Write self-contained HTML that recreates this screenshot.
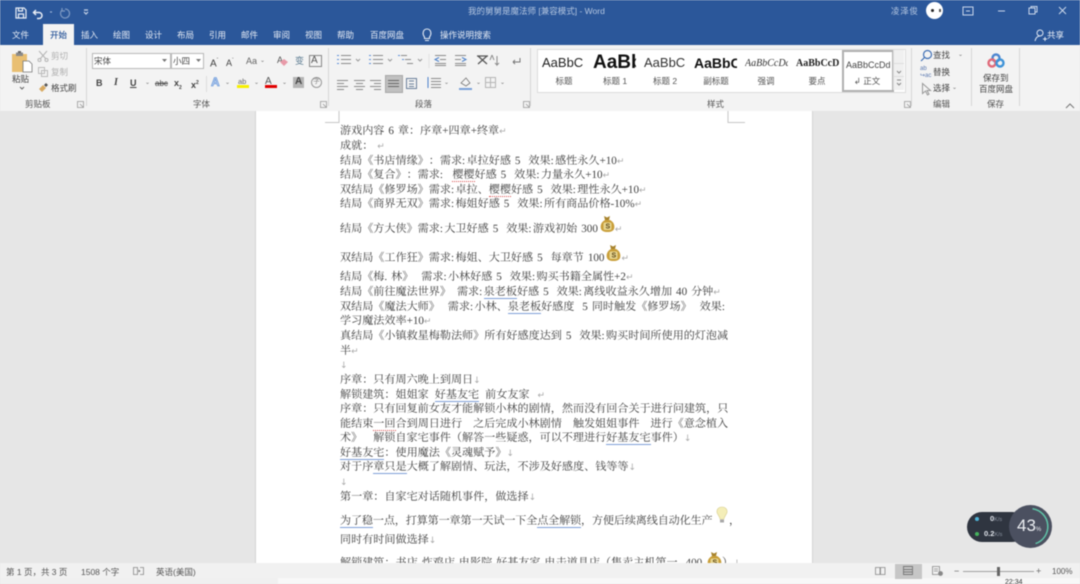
<!DOCTYPE html>
<html lang="zh"><head><meta charset="utf-8"><title>Word</title>
<style>
html,body{margin:0;padding:0;background:#e6e6e6}
#w{position:relative;width:1080px;height:584px;overflow:hidden;background:#e6e6e6;font-family:"Liberation Sans","Noto Sans CJK SC",sans-serif;filter:blur(.45px)}
#w div,#w span.a,#w svg.a{position:absolute}
.t{white-space:nowrap;font-size:8.5px;line-height:12px;color:#444}
.tab{white-space:nowrap;font-size:8.5px;line-height:12px;color:#e4eaf4;top:29px}
.g{white-space:nowrap;font-size:8.5px;line-height:12px;color:#555;top:98px}
.sep{width:1px;background:#d6d6d6;top:48px;height:58px}
.l{left:340px;margin-top:1px;white-space:pre;font-family:"Liberation Serif","Noto Serif CJK SC",serif;font-size:11.1px;line-height:14px;color:#404040;word-spacing:1.2px;text-rendering:geometricPrecision;font-kerning:none;text-spacing-trim:space-all}
.l i{font-style:normal;color:#aaa;font-size:9px;font-family:"DejaVu Sans",sans-serif}
.l b{font-weight:normal;display:inline-block;width:4.5px}
.l em{font-style:normal;display:inline-block;width:11px}
.l s{text-decoration:none;display:inline-block;width:6px}
.u{border-bottom:1.3px solid #7f9fd8}
.r{border-bottom:1.3px dotted #d85050}
.s{white-space:nowrap;font-size:8.5px;line-height:12px;color:#555;text-align:center;width:56px}
.ib{white-space:nowrap;color:#555;line-height:12px}
.st{white-space:nowrap;font-size:8.5px;line-height:12px;color:#555;top:566px}
</style></head><body><div id="w">

<div style="left:0;top:0;width:1080px;height:45px;background:#2b579a"></div>
<div style="left:0;top:45px;width:1080px;height:66px;background:#f3f3f3"></div>
<div style="left:43px;top:24px;width:31px;height:22px;background:#f3f3f3"></div>

<svg class="a" style="left:14px;top:5px" width="80" height="16" viewBox="0 0 80 16" fill="none" stroke="#e8edf5" stroke-width="1.2">
<path d="M2 3h8l2 2v8H2zM4.500 3v3h4V3M4.500 13V9h5v4"/>
<path d="M22 5l-2.500 2.500L22 10M20 7.500h5a3 3 0 0 1 0 6h-2" stroke-width="1.500"/>
<path d="M36 7l2 0" stroke="#9fb6d8"/>
<path d="M51 4a4.500 4.500 0 1 1-3 1.200M48 3v3h3" stroke="#7c98c2"/>
<path d="M70 7l2 2 2-2M70 5h4" stroke="#c8d4e8"/>
</svg>

<div class="t" style="left:468px;top:5px;color:#b4c6e0;font-size:8.500px">我的舅舅是魔法师 [兼容模式]  -  Word</div>
<div class="t" style="left:891px;top:5px;color:#b4c6e0;font-size:8.500px;letter-spacing:.7px">凌泽俊</div>
<div style="left:926px;top:2px;width:17px;height:17px;border-radius:50%;background:#fff"></div>
<div style="left:931px;top:9px;width:3px;height:3px;background:#222;border-radius:50%"></div>
<div style="left:939px;top:9px;width:2px;height:3px;background:#555"></div>
<svg class="a" style="left:960px;top:4px" width="110" height="14" viewBox="0 0 110 14" fill="none" stroke="#c9d6ea" stroke-width="1">
<path d="M3 3h10v8H3zM6 7h4"/>
<path d="M38 7h7"/>
<path d="M69 4h6v6h-6zM71 4V2.500h6V8h-2"/>
<path d="M99 3l7 7M106 3l-7 7"/>
</svg>

<div class="tab" style="left:12px">文件</div>
<div class="tab" style="left:50px;color:#2b579a;font-weight:500">开始</div>
<div class="tab" style="left:81px">插入</div>
<div class="tab" style="left:113px">绘图</div>
<div class="tab" style="left:145px">设计</div>
<div class="tab" style="left:177px">布局</div>
<div class="tab" style="left:209px">引用</div>
<div class="tab" style="left:241px">邮件</div>
<div class="tab" style="left:273px">审阅</div>
<div class="tab" style="left:305px">视图</div>
<div class="tab" style="left:337px">帮助</div>
<div class="tab" style="left:370px">百度网盘</div>
<svg class="a" style="left:421px;top:27px" width="12" height="15" viewBox="0 0 12 15" fill="none" stroke="#e4eaf4" stroke-width="1.100"><path d="M3.500 10C1 7 2 2 6 2s5 5 2.500 8v1.500h-5zM4 13.500h4"/></svg>
<div class="tab" style="left:440px">操作说明搜索</div>
<svg class="a" style="left:1034px;top:28px" width="13" height="14" viewBox="0 0 13 14" fill="none" stroke="#dfe7f3" stroke-width="1"><circle cx="6" cy="5" r="3"/><path d="M1 13c.5-3 2.500-5 5-5M9 11h4M11 9v4"/></svg>
<div class="tab" style="left:1047px;color:#eef2f8">共享</div>

<!-- clipboard -->
<svg class="a" style="left:11px;top:50px" width="22" height="24" viewBox="0 0 22 24"><path d="M1 4h15v18H1z" fill="#e9bf72"/><path d="M5 2.500h7V6H5z" fill="#8a8a8a"/><path d="M7 1h3v2H7z" fill="#666"/><path d="M12 11h6l3 3v8h-9z" fill="#fff" stroke="#777" stroke-width=".8"/></svg>
<div class="t" style="left:12px;top:73px;font-size:8.500px">粘贴</div>
<svg class="a" style="left:19px;top:86px" width="6" height="5" fill="none" stroke="#666"><path d="M1 1l2 2 2-2"/></svg>
<svg class="a" style="left:37px;top:50px" width="12" height="12" fill="none" stroke="#b5b5b5" stroke-width="1"><path d="M2 1l7 8M10 1L3 9"/><circle cx="2.500" cy="10" r="1.500"/><circle cx="9.500" cy="10" r="1.500"/></svg>
<div class="t" style="left:51px;top:50px;color:#b0b0b0">剪切</div>
<svg class="a" style="left:37px;top:66px" width="12" height="12" fill="none" stroke="#bbb"><path d="M1.500 1.500h6v6h-6zM4.500 4.500h6v6h-6z"/></svg>
<div class="t" style="left:51px;top:66px;color:#b0b0b0">复制</div>
<svg class="a" style="left:38px;top:82px" width="11" height="11"><path d="M1 7l4-4 3 3-4 4z" fill="#d8aa62"/><path d="M6 3l2-2 2 2-2 2z" fill="#555"/></svg>
<div class="t" style="left:51px;top:82px">格式刷</div>
<div class="g" style="left:25px">剪贴板</div>
<svg class="a" style="left:77px;top:101px" width="7" height="7" fill="none" stroke="#999" stroke-width=".8"><path d="M.5.500h6v6h-6zM3 3l3 3"/></svg>
<div class="sep" style="left:86px"></div>

<!-- font -->
<div style="left:92px;top:53px;width:77px;height:14px;background:#fff;border:1px solid #b8b8b8"></div>
<div class="t" style="left:94px;top:55px">宋体</div>
<svg class="a" style="left:162px;top:59px" width="5" height="4"><path d="M0 0h5L2.500 3z" fill="#777"/></svg>
<div style="left:171px;top:53px;width:31px;height:14px;background:#fff;border:1px solid #b8b8b8"></div>
<div class="t" style="left:173px;top:55px">小四</div>
<svg class="a" style="left:196px;top:59px" width="5" height="4"><path d="M0 0h5L2.500 3z" fill="#777"/></svg>
<div class="t" style="left:210px;top:55px;font-size:10px">A<sup style="font-size:5px">ˆ</sup></div>
<div class="t" style="left:226px;top:55px;font-size:9px">A<sup style="font-size:5px">ˇ</sup></div>
<div class="t" style="left:246px;top:55px;font-size:9px;color:#666">Aa</div>
<div class="t" style="left:260px;top:55px;font-size:6px;color:#777">⌄</div>
<div class="t" style="left:277px;top:54px;font-size:9px;color:#555">A</div>
<svg class="a" style="left:278px;top:56px" width="11" height="11"><path d="M2 6l4-3 4 3-4 4z" fill="#e89aa8"/></svg>
<div class="t" style="left:295px;top:55px;font-size:9px;color:#5a7a90">变</div>
<div style="left:309px;top:55px;width:11px;height:10px;border:1px solid #888"></div>
<div class="t" style="left:311px;top:55px;font-size:10px;color:#555;line-height:11px">A</div>
<div class="t" style="left:96px;top:77px;font-weight:bold;font-family:'Liberation Sans',sans-serif;font-size:9px">B</div>
<div class="t" style="left:114px;top:77px;font-style:italic;font-weight:bold;font-family:'Liberation Serif',serif;font-size:10px">I</div>
<div class="t" style="left:130px;top:77px;text-decoration:underline;font-size:9px;font-weight:bold">U</div>
<div class="t" style="left:145px;top:77px;font-size:6px;color:#777">⌄</div>
<div class="t" style="left:155px;top:78px;text-decoration:line-through;font-size:8px">abc</div>
<div class="t" style="left:174px;top:77px;font-weight:bold;font-size:9px">x<sub style="font-size:5px">2</sub></div>
<div class="t" style="left:191px;top:77px;font-weight:bold;font-size:9px">x<sup style="font-size:5px">2</sup></div>
<div style="left:206px;top:76px;width:1px;height:16px;background:#ddd"></div>
<div class="t" style="left:211px;top:76px;font-size:12px;color:#bcd0f0;-webkit-text-stroke:.6px #5b8fd6;font-weight:bold">A</div>
<div class="t" style="left:225px;top:77px;font-size:6px;color:#777">⌄</div>
<div class="t" style="left:238px;top:76px;font-size:7.500px;color:#666">ab</div>
<div style="left:237px;top:85px;width:12px;height:3px;background:#f6f000"></div>
<div class="t" style="left:254px;top:77px;font-size:6px;color:#777">⌄</div>
<div class="t" style="left:265px;top:76px;font-size:10px;color:#555">A</div>
<div style="left:265px;top:85px;width:12px;height:3px;background:#e00000"></div>
<div class="t" style="left:282px;top:77px;font-size:6px;color:#777">⌄</div>
<div style="left:293px;top:77px;width:11px;height:11px;background:#b5b5b5"></div>
<div class="t" style="left:295px;top:76px;font-size:10px;color:#444;font-weight:bold">A</div>
<div style="left:311px;top:77px;width:9px;height:9px;border:1px solid #999;border-radius:50%"></div>
<div class="t" style="left:313px;top:76px;font-size:7px;color:#888">字</div>
<div class="g" style="left:193px">字体</div>
<svg class="a" style="left:320px;top:101px" width="7" height="7" fill="none" stroke="#999" stroke-width=".8"><path d="M.5.500h6v6h-6zM3 3l3 3"/></svg>
<div class="sep" style="left:328px"></div>

<!-- paragraph -->
<svg class="a" style="left:335px;top:53px" width="165" height="40" viewBox="0 0 165 40" fill="none" stroke="#8a8a8a" stroke-width="1">
<path d="M6 2.500h10M6 6.500h10M6 10.500h10" /><path d="M2 2.500h2M2 6.500h2M2 10.500h2" stroke="#5b8fd6"/>
<path d="M21 6l2 2 2-2" stroke="#999"/>
<path d="M38 2.500h10M38 6.500h10M38 10.500h10"/><path d="M34 2.500h2M34 6.500h2M34 10.500h2" stroke="#5b8fd6"/>
<path d="M53 6l2 2 2-2" stroke="#999"/>
<path d="M66 2.500h6M70 6.500h6M72 10.500h6"/><path d="M63 2.500h2M67 6.500h2" stroke="#5b8fd6"/>
<path d="M83 6l2 2 2-2" stroke="#999"/>
<path d="M94 1v14" stroke="#e2e2e2"/>
<path d="M100 2.500h11M105 6.500h6M100 10.500h11M100 12.500h11"/><path d="M104 4.500l-4 2 4 2" stroke="#4a7fc8"/>
<path d="M120 2.500h11M120 6.500h6M120 10.500h11M120 12.500h11"/><path d="M127 4.500l4 2-4 2" stroke="#4a7fc8"/>
<path d="M143 3l9 8M152 3l-9 8M142 3h11" stroke="#555" stroke-width="1.200"/>
<path d="M2 27.500h11M2 30.500h7M2 33.500h11M2 36.500h7"/>
<path d="M19 27.500h11M21 30.500h7M19 33.500h11M21 36.500h7"/>
<path d="M35 27.500h11M39 30.500h7M35 33.500h11M39 36.500h7"/>
</svg>
<svg class="a" style="left:489px;top:54px" width="12" height="14" fill="none" stroke="#8a8a8a"><path d="M3 1l-2 5M3 1l2 5M8 2v9l2-2M8 11l-2-2" /></svg>
<svg class="a" style="left:511px;top:55px" width="12" height="12" fill="none" stroke="#777"><path d="M2 7h7V3M2 7l2-2M2 7l2 2"/></svg>
<div style="left:385px;top:75px;width:16px;height:16px;background:#c0c0c0;border:1px solid #a8a8a8"></div>
<svg class="a" style="left:388px;top:79px" width="12" height="10" fill="none" stroke="#666"><path d="M0 1.500h11M0 4.500h11M0 7.500h11"/></svg>
<svg class="a" style="left:405px;top:77px" width="13" height="13" fill="none" stroke="#6a7f9a"><path d="M1.500 1.500h10v10h-10zM4 4h5M4 7h5M4 9.500h5"/></svg>
<svg class="a" style="left:425px;top:76px" width="22" height="14" fill="none" stroke="#8a8a8a"><path d="M6 2.500h10M6 5.500h10M6 8.500h10M6 11.500h10"/><path d="M3 1v11" stroke="#4a7fc8"/></svg>
<div class="t" style="left:444px;top:77px;font-size:6px;color:#777">⌄</div>
<svg class="a" style="left:458px;top:75px" width="16" height="16"><path d="M3 8l5-5 4 5-4 3z" fill="#f4f4f4" stroke="#777" stroke-width=".8"/><path d="M1 13h13v2H1z" fill="#7aa0d8"/></svg>
<div class="t" style="left:476px;top:77px;font-size:6px;color:#777">⌄</div>
<svg class="a" style="left:484px;top:76px" width="14" height="14" fill="none" stroke="#b5b5b5"><path d="M1.500 1.500h10v10h-10zM6.500 1.500v10M1.500 6.500h10"/></svg>
<div class="t" style="left:500px;top:77px;font-size:6px;color:#777">⌄</div>
<div class="g" style="left:415px">段落</div>
<svg class="a" style="left:523px;top:101px" width="7" height="7" fill="none" stroke="#999" stroke-width=".8"><path d="M.5.500h6v6h-6zM3 3l3 3"/></svg>
<div class="sep" style="left:530px"></div>

<!-- styles -->
<div style="left:537px;top:49px;width:367px;height:42px;background:#fff;border:1px solid #dcdcdc"></div>
<div class="ib" style="left:542px;top:57px;font-size:13px;color:#222;width:45px;overflow:hidden">AaBbC</div>
<div class="s" style="left:536px;top:75px">标题</div>
<div class="ib" style="left:593px;top:52px;font-size:19px;line-height:22px;font-weight:bold;color:#111;width:43px;overflow:hidden">AaBb</div>
<div class="s" style="left:587px;top:75px">标题 1</div>
<div class="ib" style="left:644px;top:57px;font-size:13px;color:#333;width:45px;overflow:hidden">AaBbC</div>
<div class="s" style="left:637px;top:75px">标题 2</div>
<div class="ib" style="left:694px;top:57px;font-size:14px;font-weight:bold;color:#111;width:43px;overflow:hidden">AaBbC</div>
<div class="s" style="left:688px;top:75px">副标题</div>
<div class="ib" style="left:745px;top:58px;font-size:10px;font-style:italic;font-family:'Liberation Serif',serif;color:#333;width:43px;overflow:hidden">AaBbCcDd</div>
<div class="s" style="left:738px;top:75px">强调</div>
<div class="ib" style="left:796px;top:58px;font-size:10px;font-weight:bold;font-family:'Liberation Serif',serif;color:#222;width:43px;overflow:hidden">AaBbCcDd</div>
<div class="s" style="left:789px;top:75px">要点</div>
<div style="left:842px;top:50px;width:48px;height:38px;border:2px solid #b0b0b0;background:#fff"></div>
<div class="ib" style="left:846px;top:59px;font-size:9px;color:#444;width:45px;overflow:hidden">AaBbCcDd</div>
<div class="s" style="left:839px;top:75px">↲ 正文</div>
<div style="left:893px;top:50px;width:10px;height:40px;background:#f0f0f0;border-left:1px solid #ddd"></div>
<svg class="a" style="left:894px;top:50px" width="10" height="40" fill="none" stroke="#888"><path d="M0 13.500h10M0 26.500h10" stroke="#ddd"/><path d="M3 21l2 2 2-2M3 33l2 2 2-2M3 30h4"/></svg>
<div class="g" style="left:707px">样式</div>
<svg class="a" style="left:904px;top:101px" width="7" height="7" fill="none" stroke="#999" stroke-width=".8"><path d="M.5.500h6v6h-6zM3 3l3 3"/></svg>
<div class="sep" style="left:911px"></div>

<!-- editing -->
<svg class="a" style="left:920px;top:49px" width="13" height="13" fill="none" stroke="#3f6fb5" stroke-width="1.200"><circle cx="7.500" cy="5.500" r="4"/><path d="M4.500 8.500L1 12"/></svg>
<div class="t" style="left:933px;top:49px">查找</div>
<div class="t" style="left:958px;top:49px;font-size:6px;color:#777">⌄</div>
<div class="t" style="left:920px;top:66px;font-size:6px;line-height:7px;color:#5a78b0">ab<br>↪ac</div>
<div class="t" style="left:933px;top:66px">替换</div>
<svg class="a" style="left:921px;top:82px" width="11" height="14" fill="none" stroke="#999"><path d="M1.500 1.500v10l3-2.500 2 4 1.500-.8-2-3.700h3.500z"/></svg>
<div class="t" style="left:933px;top:82px">选择</div>
<div class="t" style="left:952px;top:82px;font-size:6px;color:#777">⌄</div>
<div class="g" style="left:933px">编辑</div>
<div class="sep" style="left:971px"></div>

<svg class="a" style="left:987px;top:53px" width="18" height="15" fill="none" stroke-width="2.400"><circle cx="9" cy="5" r="3.500" stroke="#4e86d0"/><circle cx="5" cy="10" r="3.500" stroke="#e06a7a"/><circle cx="13" cy="10" r="3.500" stroke="#3f93d8"/></svg>
<div class="t" style="left:983px;top:72px">保存到</div>
<div class="t" style="left:979px;top:83px">百度网盘</div>
<div class="g" style="left:987px">保存</div>
<div class="sep" style="left:1019px"></div>
<svg class="a" style="left:1065px;top:103px" width="10" height="6" fill="none" stroke="#777"><path d="M1 5l4-4 4 4"/></svg>

<!-- page -->
<div style="left:256px;top:111px;width:556px;height:452px;background:#fff"></div>
<div style="left:255px;top:111px;width:1px;height:452px;background:#d4d4d4"></div>
<div style="left:812px;top:111px;width:1px;height:452px;background:#d4d4d4"></div>
<svg class="a" style="left:325px;top:111px" width="420" height="12" fill="none" stroke="#c6c6c6" stroke-width="1"><path d="M14 0v11.500H0M403 0v11.500H420"/></svg>

<div class="l" style="top:123px">游戏内容 6 章：序章+四章+终章<i>↵</i></div>
<div class="l" style="top:138px">成就： <i>↵</i></div>
<div class="l" style="top:153px">结局《书店情缘》：需求<b>:</b>卓拉好感 5  效果<b>:</b>感性永久+10<i>↵</i></div>
<div class="l" style="top:167px">结局《复合》：需求<b>:</b>  <span class="r">樱樱</span>好感 5  效果<b>:</b>力量永久+10<i>↵</i></div>
<div class="l" style="top:182px">双结局《修罗场》需求<b>:</b>卓拉、<span class="r">樱樱</span>好感 5  效果<b>:</b>理性永久+10<i>↵</i></div>
<div class="l" style="top:196px">结局《商界无双》需求<b>:</b>梅姐好感 5  效果<b>:</b>所有商品价格-10%<i>↵</i></div>
<div class="l" style="top:221px">结局《方大侠》需求<b>:</b>大卫好感 5  效果<b>:</b>游戏初始 300<span style="display:inline-block;width:17px"></span><i>↵</i></div>
<div class="l" style="top:250px">双结局《工作狂》需求<b>:</b>梅姐、大卫好感 5  每章节 100<span style="display:inline-block;width:17px"></span><i>↵</i></div>
<div class="l" style="top:269px">结局《梅. 林》  需求<b>:</b>小林好感 5  效果<b>:</b>购买书籍全属性+2<i>↵</i></div>
<div class="l" style="top:284px">结局《前往魔法世界》<s></s>需求<b>:</b><span class="u">泉老板</span>好感 5  效果<b>:</b>离线收益永久增加 40 分钟<i>↵</i></div>
<div class="l" style="top:299px">双结局《魔法大师》  需求<b>:</b>小林、<span class="u">泉老板</span>好感度  5 同时触发《修罗场》  效果<b>:</b></div>
<div class="l" style="top:313px">学习魔法效率+10<i>↵</i></div>
<div class="l" style="top:328px">真结局《小镇救星梅勒法师》所有好感度达到 5  效果<b>:</b>购买时间所使用的灯泡减</div>
<div class="l" style="top:343px">半<i>↵</i></div>
<div class="l" style="top:357px"><i>↓</i></div>
<div class="l" style="top:372px">序章：只有周六晚上到周日<i>↓</i></div>
<div class="l" style="top:387px">解锁建筑：姐姐家<s></s><span class="u">好基友宅</span><s></s>前女友家  <i>↵</i></div>
<div class="l" style="top:401px">序章：只有回复前女友才能解锁小林的剧情，然而没有回合关于进行问建筑，只</div>
<div class="l" style="top:416px">能结束<span class="r">一回</span>合到周日进行<em></em>之后完成小林剧情<em></em>触发姐姐事件<em></em>进行《意念植入</div>
<div class="l" style="top:430px">术》<em></em>解锁自家宅事件（解答一些疑惑，可以不理进行<span class="u">好基友宅</span>事件）<i>↓</i></div>
<div class="l" style="top:445px"><span class="u">好基友宅</span>：使用魔法《灵魂赋予》<i>↓</i></div>
<div class="l" style="top:459px">对于序<span class="u">章只是</span>大概了解剧情、玩法，不涉及好感度、钱等等<i>↓</i></div>
<div class="l" style="top:474px"><i>↓</i></div>
<div class="l" style="top:489px">第一章：自家宅对话随机事件，做选择<i>↓</i></div>
<div class="l" style="top:513px;letter-spacing:-.14px"><span class="u">为了稳</span>一点，打算第一章第一天试一下全<span class="u">点全解锁</span>，方便后续离线自动化生产</div>
<div class="l" style="top:532px">同时有时间做选择<i>↓</i></div>
<div class="l" style="top:555px">解锁建筑：书店 炸鸡店 电影院 好基友家 电击道具店（售卖主机第一  400</div>

<!-- emoji bags -->
<svg class="a" style="left:600px;top:215px" width="15" height="18" viewBox="0 0 15 18"><path d="M4 1l3 1.500L10 1l-1 4H5z" fill="#a8842e"/><path d="M5 5h5c4 2 5 6 4 9-1 2-3 3-6.500 3S2 16 1 14C0 11 1 7 5 5z" fill="#c99f3a"/><rect x="3.500" y="7.500" width="8" height="7.500" rx="1.500" fill="#e6d48e"/><text x="5.500" y="13.500" font-size="7" font-weight="bold" fill="#5c4716" font-family="Liberation Sans">S</text></svg>
<svg class="a" style="left:606px;top:244px" width="15" height="18" viewBox="0 0 15 18"><path d="M4 1l3 1.500L10 1l-1 4H5z" fill="#a8842e"/><path d="M5 5h5c4 2 5 6 4 9-1 2-3 3-6.500 3S2 16 1 14C0 11 1 7 5 5z" fill="#c99f3a"/><rect x="3.500" y="7.500" width="8" height="7.500" rx="1.500" fill="#e6d48e"/><text x="5.500" y="13.500" font-size="7" font-weight="bold" fill="#5c4716" font-family="Liberation Sans">S</text></svg>
<svg class="a" style="left:707px;top:551px" width="15" height="18" viewBox="0 0 15 18"><path d="M4 1l3 1.500L10 1l-1 4H5z" fill="#a8842e"/><path d="M5 5h5c4 2 5 6 4 9-1 2-3 3-6.500 3S2 16 1 14C0 11 1 7 5 5z" fill="#c99f3a"/><rect x="3.500" y="7.500" width="8" height="7.500" rx="1.500" fill="#e6d48e"/><text x="5.500" y="13.500" font-size="7" font-weight="bold" fill="#5c4716" font-family="Liberation Sans">S</text></svg>
<div class="l" style="left:722px;top:555px;height:8px;overflow:hidden">）<i>↓</i></div>
<svg class="a" style="left:715px;top:506px" width="14" height="18" viewBox="0 0 14 18"><path d="M7 1c3.500 0 5.500 2.500 5 5.500-.5 2-2.500 3.500-3 6.500H5c-.5-3-2.500-4.500-3-6.500C1.500 3.500 3.500 1 7 1z" fill="#f4eeb8" stroke="#d8cf90" stroke-width=".6"/><path d="M5 13.500h4v3H5z" fill="#a8a8a8"/></svg>
<div class="l" style="left:729px;top:513px">，</div>

<!-- widget -->
<div style="left:967px;top:512px;width:60px;height:30px;border-radius:15px;background:#2f3540"></div>
<div style="left:975px;top:517px;width:4px;height:4px;border-radius:50%;background:#4fb4d8"></div>
<div style="left:975px;top:532px;width:4px;height:4px;border-radius:50%;background:#44b25c"></div>
<div class="t" style="left:990px;top:513px;font-size:7.500px;color:#dfe3ea;font-weight:bold">0<span style="font-size:5.500px;font-weight:normal;color:#8c94a2">K/s</span></div>
<div class="t" style="left:984px;top:528px;font-size:7.500px;color:#dfe3ea;font-weight:bold">0.2<span style="font-size:5.500px;font-weight:normal;color:#8c94a2">K/s</span></div>
<div style="left:1009px;top:505px;width:43px;height:43px;border-radius:50%;background:#4b5060"></div>
<svg class="a" style="left:1009px;top:505px" width="43" height="43" fill="none"><path d="M25 4a18 18 0 0 1 0 35" stroke="#5fc4a8" stroke-width="1.500" transform="rotate(-5 21 21)"/></svg>
<div class="t" style="left:1017px;top:516px;font-size:17px;line-height:20px;color:#eceef2">43<span style="font-size:6px">%</span></div>

<!-- status bar -->
<div style="left:0;top:563px;width:1080px;height:15px;background:#f1f1f1"></div>
<div style="left:0;top:578px;width:278px;height:6px;background:#f0f0f0"></div>
<div style="left:278px;top:578px;width:802px;height:6px;background:#f8f8f8"></div>
<div class="st" style="left:6px">第 1 页，共 3 页</div>
<div class="st" style="left:81px">1508 个字</div>
<svg class="a" style="left:133px;top:567px" width="11" height="10" fill="none" stroke="#888" stroke-width=".8"><path d="M.5.500h4v7h-4zM7 .5h3.500v7H7"/><path d="M5.500 3l1.500 1-1.500 1" fill="#666"/></svg>
<div class="st" style="left:156px">英语(美国)</div>
<svg class="a" style="left:875px;top:566px" width="11" height="11" fill="none" stroke="#888" stroke-width=".8"><path d="M.5 1.500h4.500v7H.5zM5.500 1.500h4.500v7H5.500z"/></svg>
<div style="left:895px;top:564px;width:27px;height:15px;background:#c6c6c6"></div>
<svg class="a" style="left:903px;top:566px" width="12" height="11" fill="none" stroke="#777" stroke-width=".9"><path d="M.5.500h9v8h-9zM.5 3.500h9M.5 6h9"/></svg>
<svg class="a" style="left:932px;top:566px" width="12" height="11" fill="none" stroke="#888" stroke-width=".8"><path d="M.5.500h7v8h-7zM2 3h4M2 5h4"/><circle cx="8.500" cy="7.500" r="2" fill="#888"/></svg>
<div class="t" style="left:954px;top:565px;color:#666;font-size:9px">−</div>
<div style="left:963px;top:571px;width:71px;height:1px;background:#a0a0a0"></div>
<div style="left:997px;top:567px;width:3px;height:9px;background:#666"></div>
<div class="t" style="left:1036px;top:565px;color:#666;font-size:9px">+</div>
<div class="st" style="left:1052px;top:566px;font-size:8px">100%</div>
<div class="st" style="left:1005px;top:579px;font-size:7px;color:#333;line-height:8px">22:34</div>
</div></body></html>
